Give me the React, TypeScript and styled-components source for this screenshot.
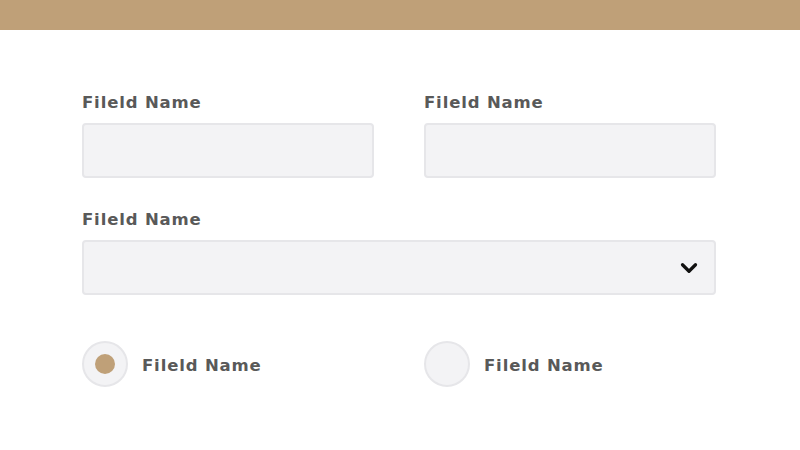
import styled, { createGlobalStyle } from 'styled-components';
import { ChevronDown } from 'lucide-react';

const GlobalStyle = createGlobalStyle`
   body {
      margin: 0;
      background: #ffffff;
      font-family: "DejaVu Sans", "Liberation Sans", sans-serif;
   }
`

const TopBar = styled.div`
   height: 30px;
   background-color: #bfa078;
`

const Form = styled.form`
   width: 634px;
   margin: 0 0 0 82px;
   padding-top: 62px;
   display: flex;
   flex-direction: column;
   gap: 31px;
`

const Row = styled.div`
   display: grid;
   grid-template-columns: 1fr 1fr;
   column-gap: 50px;
`

const Field = styled.div`
   display: flex;
   flex-direction: column;
   gap: 11px;
`

const Label = styled.label`
   height: 20px;
   line-height: 21px;
   font-size: 16.5px;
   font-weight: 700;
   letter-spacing: 0.85px;
   color: #595959;
`

const Input = styled.div`
   height: 55px;
   box-sizing: border-box;
   border: 2.5px solid #e6e6e9;
   border-radius: 4px;
   background-color: #f3f3f5;
`

const Select = styled(Input)`
   display: flex;
   align-items: center;
   justify-content: flex-end;
   padding-right: 12px;
   color: #111111;
`

const RadioRow = styled(Row)`
   margin-top: 15px;
`

const RadioItem = styled.div`
   display: flex;
   align-items: center;
   gap: 14px;
`

const RadioCircle = styled.div<{ $checked?: boolean }>`
   width: 46px;
   height: 46px;
   box-sizing: border-box;
   border-radius: 50%;
   border: 2.5px solid #e6e6e9;
   background-color: #f3f3f5;
   display: flex;
   align-items: center;
   justify-content: center;

   &::after {
      content: '';
      display: ${p => (p.$checked ? 'block' : 'none')};
      width: 20px;
      height: 20px;
      border-radius: 50%;
      background-color: #bfa078;
   }
`

const RadioLabel = styled(Label)`
   height: auto;
   padding-top: 2px;
`

const App = () => {
   return (
      <>
         <GlobalStyle />
         <TopBar />
         <Form>
            <Row>
               <Field>
                  <Label>Fileld Name</Label>
                  <Input />
               </Field>
               <Field>
                  <Label>Fileld Name</Label>
                  <Input />
               </Field>
            </Row>

            <Field>
               <Label>Fileld Name</Label>
               <Select>
                  <ChevronDown size={26} strokeWidth={3} />
               </Select>
            </Field>

            <RadioRow>
               <RadioItem>
                  <RadioCircle $checked />
                  <RadioLabel>Fileld Name</RadioLabel>
               </RadioItem>
               <RadioItem>
                  <RadioCircle />
                  <RadioLabel>Fileld Name</RadioLabel>
               </RadioItem>
            </RadioRow>
         </Form>
      </>
   )
}

export default App;
